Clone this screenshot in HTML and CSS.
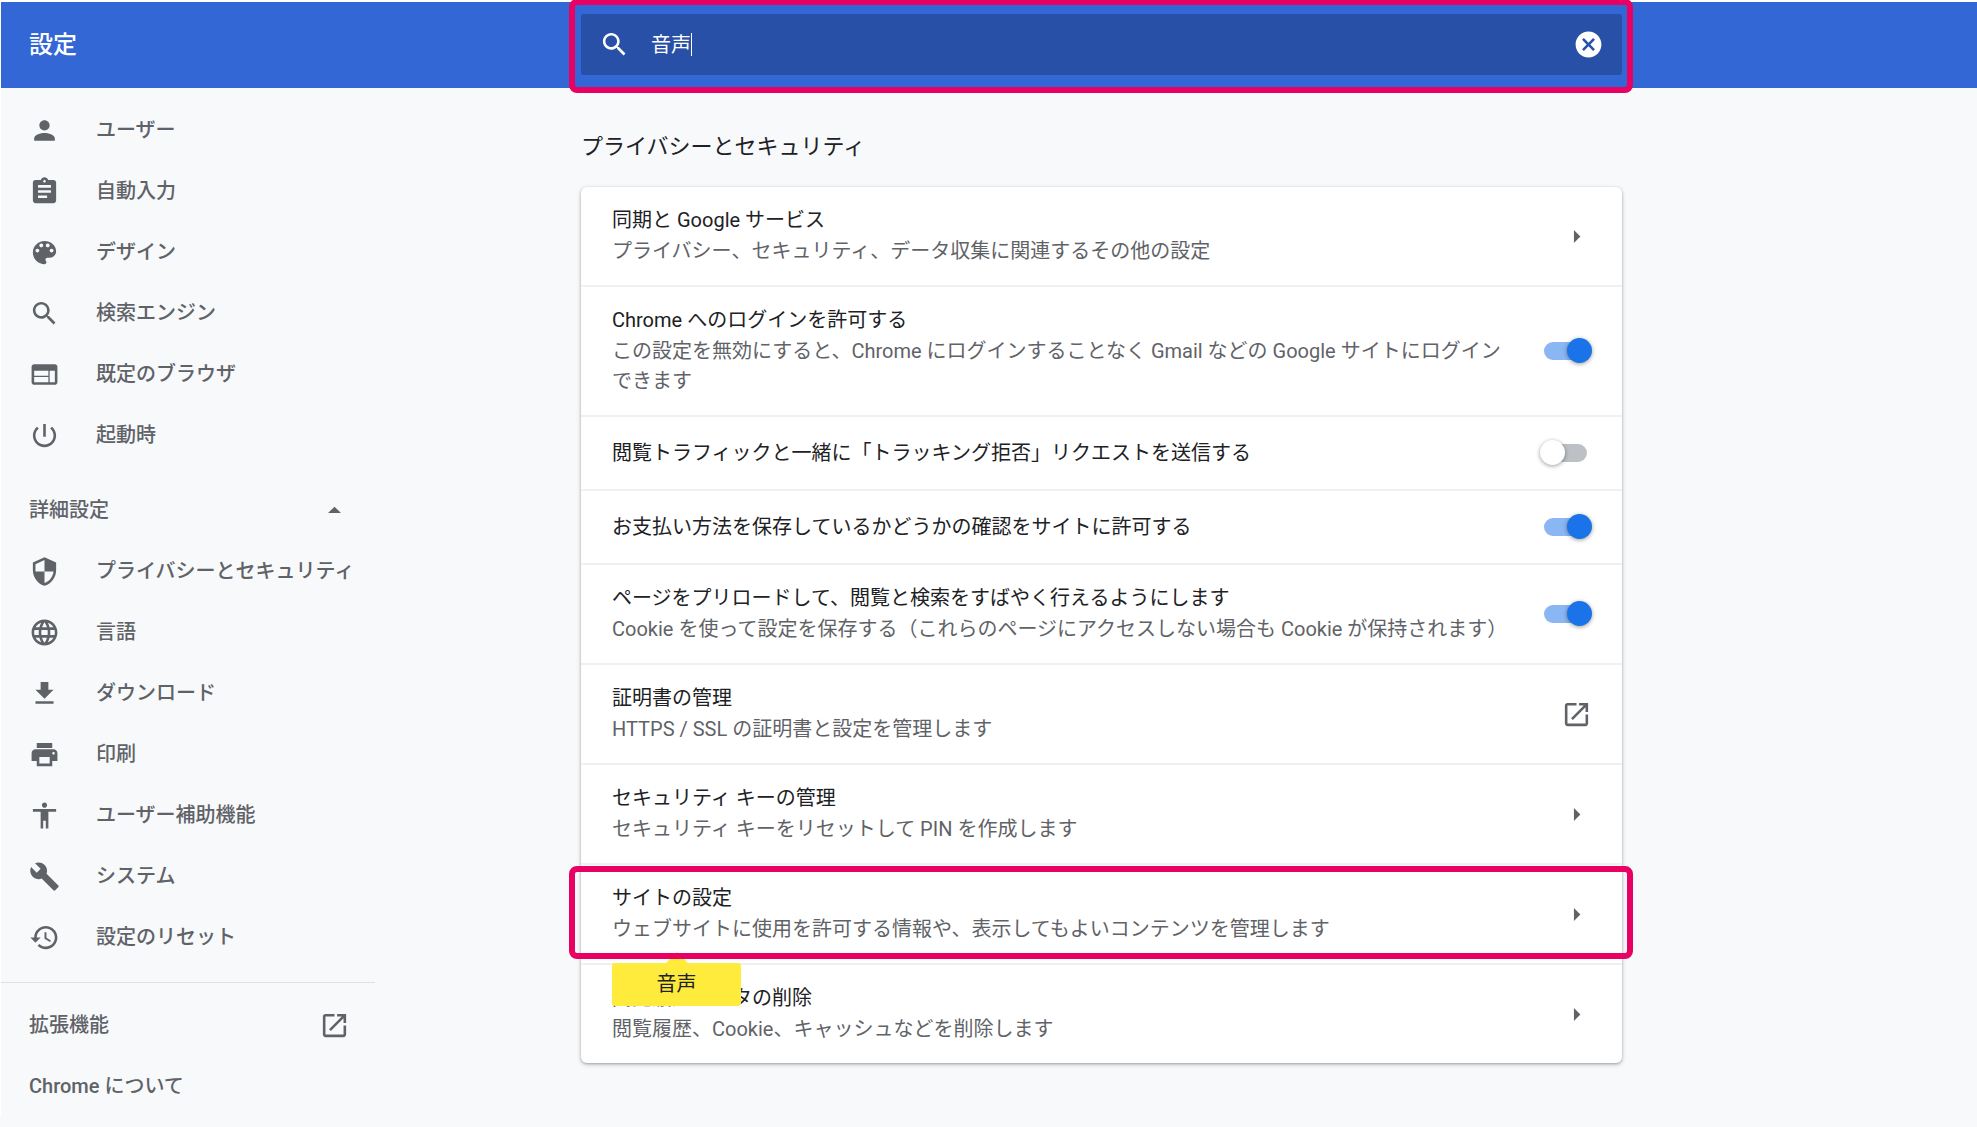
FILE: index.html
```html
<!DOCTYPE html>
<html lang="ja">
<head>
<meta charset="utf-8">
<meta name="viewport" content="width=device-width, initial-scale=1">
<title>設定</title>
<link rel="stylesheet" href="styles.css">
</head>
<body>
<svg class="sprite" aria-hidden="true">
  <symbol id="search" viewBox="0 0 24 24"><path d="M15.5 14h-.79l-.28-.27C15.41 12.59 16 11.11 16 9.5 16 5.91 13.09 3 9.5 3S3 5.91 3 9.5 5.91 16 9.5 16c1.61 0 3.09-.59 4.23-1.57l.27.28v.79l5 4.99L20.49 19l-4.99-5zm-6 0C7.01 14 5 11.99 5 9.5S7.01 5 9.5 5 14 7.01 14 9.5 11.99 14 9.5 14z"/></symbol>
  <symbol id="cancel" viewBox="0 0 24 24"><path d="M12 2C6.47 2 2 6.47 2 12s4.47 10 10 10 10-4.47 10-10S17.53 2 12 2zm5 13.59L15.59 17 12 13.41 8.41 17 7 15.59 10.59 12 7 8.41 8.41 7 12 10.59 15.59 7 17 8.41 13.41 12 17 15.59z"/></symbol>
  <symbol id="person" viewBox="0 0 24 24"><path d="M12 12c2.21 0 4-1.79 4-4s-1.79-4-4-4-4 1.79-4 4 1.79 4 4 4zm0 2c-2.67 0-8 1.34-8 4v2h16v-2c0-2.66-5.33-4-8-4z"/></symbol>
  <symbol id="assignment" viewBox="0 0 24 24"><path d="M19 3h-4.18C14.4 1.84 13.3 1 12 1c-1.3 0-2.4.84-2.82 2H5c-1.1 0-2 .9-2 2v14c0 1.1.9 2 2 2h14c1.1 0 2-.9 2-2V5c0-1.1-.9-2-2-2zm-7 0c.55 0 1 .45 1 1s-.45 1-1 1-1-.45-1-1 .45-1 1-1zm2 14H7v-2h7v2zm3-4H7v-2h10v2zm0-4H7V7h10v2z"/></symbol>
  <symbol id="palette" viewBox="0 0 24 24"><path d="M12 3c-4.97 0-9 4.03-9 9s4.03 9 9 9c.83 0 1.5-.67 1.5-1.5 0-.39-.15-.74-.39-1.01-.23-.26-.38-.61-.38-.99 0-.83.67-1.5 1.5-1.5H16c2.76 0 5-2.24 5-5 0-4.42-4.03-8-9-8zm-5.5 9c-.83 0-1.5-.67-1.5-1.5S5.67 9 6.5 9 8 9.67 8 10.5 7.33 12 6.5 12zm3-4C8.67 8 8 7.33 8 6.5S8.67 5 9.5 5s1.5.67 1.5 1.5S10.33 8 9.5 8zm5 0c-.83 0-1.5-.67-1.5-1.5S13.67 5 14.5 5s1.5.67 1.5 1.5S15.33 8 14.5 8zm3 4c-.83 0-1.5-.67-1.5-1.5S16.67 9 17.5 9s1.5.67 1.5 1.5-.67 1.5-1.5 1.5z"/></symbol>
  <symbol id="web" viewBox="0 0 24 24"><path d="M20 4H4c-1.1 0-1.99.9-1.99 2L2 18c0 1.1.9 2 2 2h16c1.1 0 2-.9 2-2V6c0-1.1-.9-2-2-2zm-5 14H4v-4h11v4zm0-5H4V9h11v4zm5 5h-4V9h4v9z"/></symbol>
  <symbol id="power" viewBox="0 0 24 24"><path d="M13 3h-2v10h2V3zm4.83 2.17l-1.42 1.42C17.99 7.86 19 9.81 19 12c0 3.87-3.13 7-7 7s-7-3.13-7-7c0-2.19 1.01-4.14 2.58-5.42L6.17 5.17C4.23 6.82 3 9.26 3 12c0 4.97 4.03 9 9 9s9-4.03 9-9c0-2.74-1.23-5.18-3.17-6.83z"/></symbol>
  <symbol id="drop-up" viewBox="0 0 24 24"><path d="M7 14l5-5 5 5z"/></symbol>
  <symbol id="security" viewBox="0 0 24 24"><path d="M12 1L3 5v6c0 5.55 3.84 10.74 9 12 5.16-1.26 9-6.45 9-12V5l-9-4zm0 10.99h7c-.53 4.12-3.28 7.79-7 8.94V12H5V6.3l7-3.11v8.8z"/></symbol>
  <symbol id="language" viewBox="0 0 24 24"><path d="M11.99 2C6.47 2 2 6.48 2 12s4.47 10 9.99 10C17.52 22 22 17.52 22 12S17.52 2 11.99 2zm6.93 6h-2.95c-.32-1.25-.78-2.45-1.38-3.56 1.84.63 3.37 1.91 4.33 3.56zM12 4.04c.83 1.2 1.48 2.53 1.91 3.96h-3.82c.43-1.43 1.08-2.76 1.91-3.96zM4.26 14C4.1 13.36 4 12.69 4 12s.1-1.36.26-2h3.38c-.08.66-.14 1.32-.14 2s.06 1.34.14 2H4.26zm.82 2h2.95c.32 1.25.78 2.45 1.38 3.56-1.84-.63-3.37-1.9-4.33-3.56zm2.95-8H5.08c.96-1.66 2.49-2.93 4.33-3.56C8.81 5.55 8.35 6.75 8.03 8zM12 19.96c-.83-1.2-1.48-2.53-1.91-3.96h3.82c-.43 1.43-1.08 2.76-1.91 3.96zM14.34 14H9.66c-.09-.66-.16-1.32-.16-2s.07-1.35.16-2h4.68c.09.65.16 1.32.16 2s-.07 1.34-.16 2zm.25 5.56c.6-1.11 1.06-2.31 1.38-3.56h2.95c-.96 1.65-2.49 2.93-4.33 3.56zM16.36 14c.08-.66.14-1.32.14-2s-.06-1.34-.14-2h3.38c.16.64.26 1.31.26 2s-.1 1.36-.26 2h-3.38z"/></symbol>
  <symbol id="download" viewBox="0 0 24 24"><path d="M19 9h-4V3H9v6H5l7 7 7-7zM5 18v2h14v-2H5z"/></symbol>
  <symbol id="print" viewBox="0 0 24 24"><path d="M19 8H5c-1.66 0-3 1.34-3 3v6h4v4h12v-4h4v-6c0-1.66-1.34-3-3-3zm-3 11H8v-5h8v5zm3-7c-.55 0-1-.45-1-1s.45-1 1-1 1 .45 1 1-.45 1-1 1zm-1-9H6v4h12V3z"/></symbol>
  <symbol id="accessibility" viewBox="0 0 24 24"><path d="M12 2c1.1 0 2 .9 2 2s-.9 2-2 2-2-.9-2-2 .9-2 2-2zm9 7h-6v13h-2v-6h-2v6H9V9H3V7h18v2z"/></symbol>
  <symbol id="build" viewBox="0 0 24 24"><path d="M22.7 19l-9.1-9.1c.9-2.3.4-5-1.5-6.9-2-2-5-2.4-7.4-1.3L9 6 6 9 1.6 4.7C.4 7.1.9 10.1 2.9 12.1c1.9 1.9 4.6 2.4 6.9 1.5l9.1 9.1c.4.4 1 .4 1.4 0l2.3-2.3c.5-.4.5-1.1.1-1.4z"/></symbol>
  <symbol id="restore" viewBox="0 0 24 24"><path d="M13 3c-4.97 0-9 4.03-9 9H1l3.89 3.89.07.14L9 12H6c0-3.87 3.13-7 7-7s7 3.13 7 7-3.13 7-7 7c-1.93 0-3.68-.79-4.94-2.06l-1.42 1.42C8.27 19.99 10.51 21 13 21c4.97 0 9-4.03 9-9s-4.03-9-9-9zm-1 5v5l4.28 2.54.72-1.21-3.5-2.08V8H12z"/></symbol>
  <symbol id="open" viewBox="0 0 24 24"><path d="M19 19H5V5h7V3H5c-1.11 0-2 .9-2 2v14c0 1.1.89 2 2 2h14c1.1 0 2-.9 2-2v-7h-2v7zM14 3v2h3.59l-9.83 9.83 1.41 1.41L19 6.41V10h2V3h-7z"/></symbol>
  <symbol id="arrow" viewBox="0 0 24 24"><path d="M10 17l5-5-5-5z"/></symbol>
</svg>

<div class="page">
  <header class="toolbar columns">
    <h1 class="toolbar-title">設定</h1>
    <div class="search marked">
      <svg class="icon"><use href="#search"/></svg>
      <label class="search-field">
        <input class="search-input" type="text" size="4" value="音声" aria-label="設定項目を検索">
        <span class="caret"></span>
      </label>
      <button class="icon-button" type="button" aria-label="検索をクリア"><svg class="icon"><use href="#cancel"/></svg></button>
    </div>
  </header>

  <div class="columns">
    <nav class="menu">
      <a class="menu-item" href="#"><svg class="icon"><use href="#person"/></svg><span>ユーザー</span></a>
      <a class="menu-item" href="#"><svg class="icon"><use href="#assignment"/></svg><span>自動入力</span></a>
      <a class="menu-item" href="#"><svg class="icon"><use href="#palette"/></svg><span>デザイン</span></a>
      <a class="menu-item" href="#"><svg class="icon"><use href="#search"/></svg><span>検索エンジン</span></a>
      <a class="menu-item" href="#"><svg class="icon"><use href="#web"/></svg><span>既定のブラウザ</span></a>
      <a class="menu-item" href="#"><svg class="icon"><use href="#power"/></svg><span>起動時</span></a>

      <button class="menu-item menu-toggle" type="button" aria-expanded="true"><span>詳細設定</span><svg class="icon"><use href="#drop-up"/></svg></button>

      <a class="menu-item" href="#"><svg class="icon"><use href="#security"/></svg><span>プライバシーとセキュリティ</span></a>
      <a class="menu-item" href="#"><svg class="icon"><use href="#language"/></svg><span>言語</span></a>
      <a class="menu-item" href="#"><svg class="icon"><use href="#download"/></svg><span>ダウンロード</span></a>
      <a class="menu-item" href="#"><svg class="icon"><use href="#print"/></svg><span>印刷</span></a>
      <a class="menu-item" href="#"><svg class="icon"><use href="#accessibility"/></svg><span>ユーザー補助機能</span></a>
      <a class="menu-item" href="#"><svg class="icon"><use href="#build"/></svg><span>システム</span></a>
      <a class="menu-item" href="#"><svg class="icon"><use href="#restore"/></svg><span>設定のリセット</span></a>

      <hr class="menu-divider">

      <a class="menu-item menu-spread" href="#"><span>拡張機能</span><svg class="icon"><use href="#open"/></svg></a>
      <a class="menu-item" href="#"><span>Chrome について</span></a>
    </nav>

    <main>
      <h2 class="section-title">プライバシーとセキュリティ</h2>
      <div class="card">
        <div class="row">
          <div class="row-text">
            <p class="row-title">同期と Google サービス</p>
            <p class="row-note">プライバシー、セキュリティ、データ収集に関連するその他の設定</p>
          </div>
          <button class="icon-button" type="button" aria-label="同期と Google サービス"><svg class="icon"><use href="#arrow"/></svg></button>
        </div>
        <div class="row">
          <label class="row-text" for="allow-login">
            <span class="row-title">Chrome へのログインを許可する</span>
            <span class="row-note">この設定を無効にすると、Chrome にログインすることなく Gmail などの Google サイトにログインできます</span>
          </label>
          <input class="switch" type="checkbox" id="allow-login" checked>
        </div>
        <div class="row">
          <label class="row-text" for="do-not-track">
            <span class="row-title">閲覧トラフィックと一緒に「トラッキング拒否」リクエストを送信する</span>
          </label>
          <input class="switch" type="checkbox" id="do-not-track">
        </div>
        <div class="row">
          <label class="row-text" for="payment">
            <span class="row-title">お支払い方法を保存しているかどうかの確認をサイトに許可する</span>
          </label>
          <input class="switch" type="checkbox" id="payment" checked>
        </div>
        <div class="row">
          <label class="row-text" for="preload">
            <span class="row-title">ページをプリロードして、閲覧と検索をすばやく行えるようにします</span>
            <span class="row-note">Cookie を使って設定を保存する（これらのページにアクセスしない場合も Cookie が保持されます）</span>
          </label>
          <input class="switch" type="checkbox" id="preload" checked>
        </div>
        <div class="row">
          <div class="row-text">
            <p class="row-title">証明書の管理</p>
            <p class="row-note">HTTPS / SSL の証明書と設定を管理します</p>
          </div>
          <button class="icon-button" type="button" aria-label="証明書の管理"><svg class="icon"><use href="#open"/></svg></button>
        </div>
        <div class="row">
          <div class="row-text">
            <p class="row-title">セキュリティ キーの管理</p>
            <p class="row-note">セキュリティ キーをリセットして PIN を作成します</p>
          </div>
          <button class="icon-button" type="button" aria-label="セキュリティ キーの管理"><svg class="icon"><use href="#arrow"/></svg></button>
        </div>
        <div class="row marked">
          <div class="row-text">
            <p class="row-title">サイトの設定</p>
            <p class="row-note">ウェブサイトに使用を許可する情報や、表示してもよいコンテンツを管理します</p>
          </div>
          <button class="icon-button" type="button" aria-label="サイトの設定"><svg class="icon"><use href="#arrow"/></svg></button>
          <div class="bubble" role="tooltip">音声</div>
        </div>
        <div class="row">
          <div class="row-text">
            <p class="row-title">閲覧履歴データの削除</p>
            <p class="row-note">閲覧履歴、Cookie、キャッシュなどを削除します</p>
          </div>
          <button class="icon-button" type="button" aria-label="閲覧履歴データの削除"><svg class="icon"><use href="#arrow"/></svg></button>
        </div>
      </div>
    </main>
  </div>
</div>
</body>
</html>
```

FILE: styles.css
```css
:root {
  --blue: #3367d6;
  --blue-dark: #2850a7;
  --accent: #1a73e8;
  --ink: #202124;
  --ink-soft: #5f6368;
  --line: #f0f0f1;
  --mark: #e80063;
}

* {
  box-sizing: border-box;
}

body {
  margin: 0;
  background: #f8f9fb;
  color: var(--ink);
  font: 400 20px/30px Roboto, "Noto Sans CJK JP", sans-serif;
}

h1, h2, p {
  margin: 0;
}

button, input {
  margin: 0;
  padding: 0;
  border: 0;
  background: none;
  color: inherit;
  font: inherit;
}

.sprite {
  display: none;
}

.icon {
  display: block;
  flex: none;
  width: 31px;
  height: 31px;
  fill: currentColor;
}

.icon-button {
  flex: none;
  color: var(--ink-soft);
  cursor: pointer;
}

.page {
  border-top: 2px solid #fff;
  border-left: 1px solid #fff;
}

/* menu side, settings column, free space on the right */
.columns {
  display: grid;
  grid-template-columns: minmax(374px, 580fr) minmax(0, 1041px) 355fr;
  align-items: start;
}

/* toolbar */
.toolbar {
  align-items: center;
  padding: 12px 0 13px;
  background: var(--blue);
  color: #fff;
}

.toolbar-title {
  padding-left: 28px;
  font-size: 24px;
  font-weight: 500;
}

.search {
  display: flex;
  align-items: center;
  height: 61px;
  padding: 0 18px;
  border-radius: 3px;
  background: var(--blue-dark);
}

.search .icon-button {
  color: #fff;
}

.search-field {
  display: flex;
  flex: 1;
  align-items: center;
  padding-left: 21px;
  cursor: text;
}

.search-input {
  field-sizing: content;
  outline: 0;
}

.caret {
  width: 1px;
  height: 23px;
  background: #fff;
}

/* frame drawn round a highlighted element */
.marked {
  position: relative;
}

.marked::after {
  content: "";
  position: absolute;
  inset: -15px -11px -18px -12px;
  border: 6px solid var(--mark);
  border-radius: 8px;
  pointer-events: none;
}

.row.marked::after {
  inset: 1px -11px 4px -12px;
}

/* side menu */
.menu {
  width: 374px;
  padding-top: 12px;
  color: var(--ink-soft);
  font-weight: 500;
}

.menu-item {
  display: flex;
  align-items: center;
  gap: 36px;
  width: 100%;
  height: 61px;
  padding: 0 25px 0 28px;
  color: inherit;
  text-decoration: none;
  white-space: nowrap;
}

.menu-item span {
  padding-bottom: 2px;
}

.menu-toggle {
  margin-top: 14px;
}

.menu-toggle,
.menu-spread {
  justify-content: space-between;
}

.menu-divider {
  height: 1px;
  margin: 14px 0 12px;
  border: 0;
  background: #dfe0e3;
}

/* settings */
.section-title {
  padding: 43px 0 24px;
  font-size: 22px;
  font-weight: 400;
  line-height: 32px;
}

.card {
  border-radius: 6px;
  background: #fff;
  box-shadow: 0 1px 3px rgba(60, 64, 67, .4), 0 2px 5px rgba(60, 64, 67, .15);
}

.row {
  display: flex;
  align-items: center;
  gap: 36px;
  min-height: 74px;
  padding: 19px 30px 19px 31px;
}

.row + .row {
  border-top: 2px solid var(--line);
}

.row-text {
  flex: 1;
  min-width: 0;
}

.row-title,
.row-note {
  display: block;
}

.row-title {
  line-height: 28px;
}

.row-note {
  margin-top: 2px;
  color: var(--ink-soft);
}

.switch {
  appearance: none;
  position: relative;
  flex: none;
  width: 43px;
  height: 18px;
  margin-right: 5px;
  border-radius: 9px;
  background: #bdc1c6;
  cursor: pointer;
}

.switch::before {
  content: "";
  position: absolute;
  top: -4px;
  left: -4px;
  width: 25px;
  height: 25px;
  border-radius: 50%;
  background: #fff;
  box-shadow: 0 1px 4px rgba(0, 0, 0, .4);
}

.switch:checked {
  background: #8ab6f3;
}

.switch:checked::before {
  left: 23px;
  background: var(--accent);
}

/* search hit bubble under a row */
.bubble {
  position: absolute;
  top: 98px;
  left: 31px;
  width: 129px;
  padding: 6px 0 7px;
  border-radius: 3px;
  background: #ffeb3b;
  text-align: center;
  z-index: 1;
}

.marked::after {
  z-index: 2;
}

.bubble::before {
  content: "";
  position: absolute;
  bottom: 100%;
  left: 50%;
  margin-left: -11px;
  border: 11px solid transparent;
  border-top-width: 0;
  border-bottom-color: #ffeb3b;
}
```
